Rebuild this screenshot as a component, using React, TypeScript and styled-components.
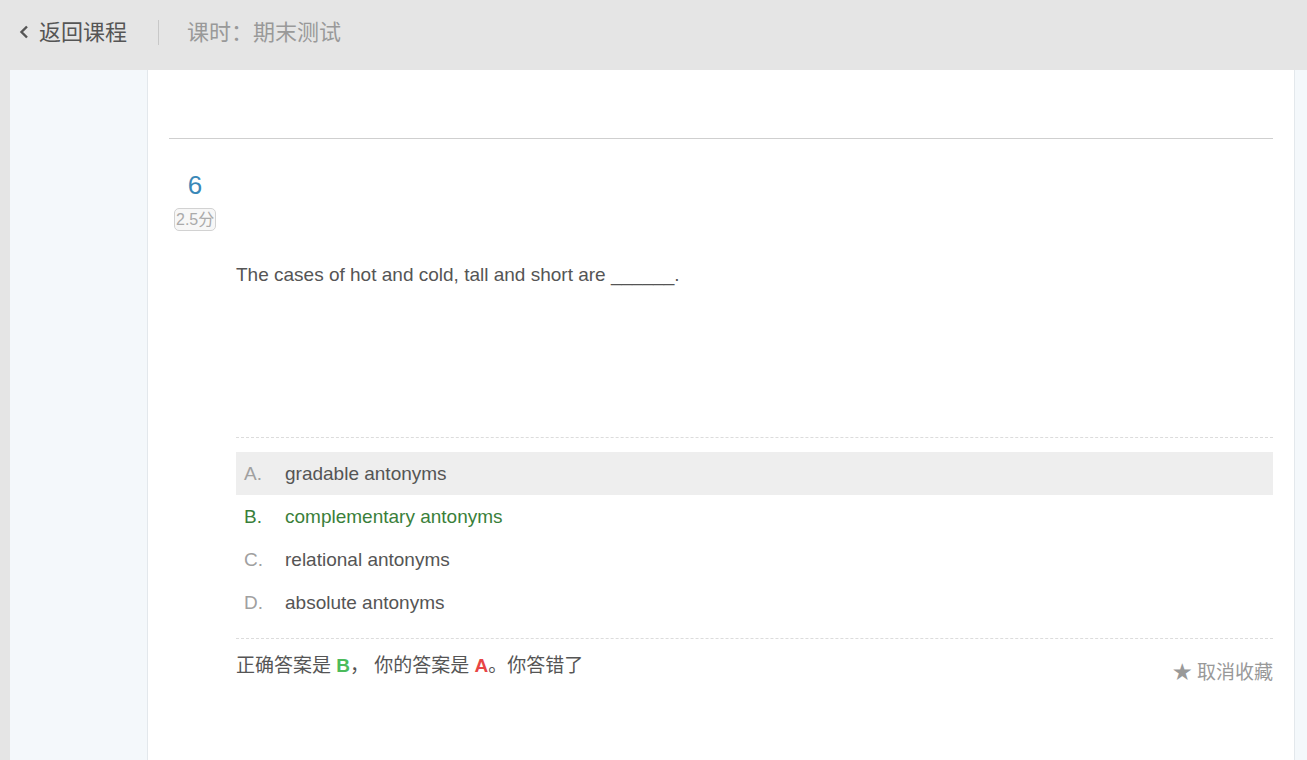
import React from 'react';
import styled, { createGlobalStyle } from 'styled-components';

const GlobalStyle = createGlobalStyle`
  html, body {
    margin: 0;
    padding: 0;
    background: #e5e5e5;
    font-family: 'Liberation Sans', Arial, 'Noto Sans CJK SC', sans-serif;
  }
`;

const Page = styled.div`
  height: 760px;
  display: flex;
  flex-direction: column;
  overflow: hidden;
`;

const TopBar = styled.div`
  height: 70px;
  flex-shrink: 0;
  box-sizing: border-box;
  padding: 0 0 6px 18px;
  display: flex;
  align-items: center;
  background: #e5e5e5;
`;

const BackLink = styled.a`
  display: flex;
  align-items: center;
  gap: 9px;
  font-size: 22px;
  color: #555;
  cursor: pointer;
  padding-right: 31px;
  border-right: 1px solid #c8c8c8;
  height: 25px;
  line-height: 25px;
`;

const LessonTitle = styled.span`
  font-size: 22px;
  line-height: 25px;
  color: #999;
  padding-left: 28px;
`;

const Body = styled.div`
  flex: 1;
  display: flex;
  padding-left: 10px;
`;

const Sidebar = styled.div`
  width: 137px;
  background: #f4f8fb;
  border-right: 1px solid #e3e8ec;
`;

const Main = styled.div`
  flex: 1;
  background: #fff;
  border-right: 1px solid #e3e8ec;
  padding: 68px 21px 0 21px;
`;

const RightRail = styled.div`
  width: 12px;
  background: #f4f8fb;
`;

const Rule = styled.div`
  height: 1px;
  background: #cfcfcf;
`;

const Question = styled.div`
  display: flex;
  padding-top: 30px;
`;

const IndexCol = styled.div`
  width: 67px;
  display: flex;
  flex-direction: column;
  align-items: flex-start;
`;

const Num = styled.div`
  width: 52px;
  text-align: center;
  font-size: 26px;
  color: #3a88b8;
  line-height: 32px;
`;

const Score = styled.span`
  margin-left: 5px;
  margin-top: 7px;
  border: 1px solid #d2d2d2;
  border-radius: 5px;
  background: #f7f7f7;
  color: #aaa;
  font-size: 16px;
  line-height: 21px;
  padding: 0 1px;
`;

const Content = styled.div`
  flex: 1;
`;

const Stem = styled.div`
  font-size: 19px;
  line-height: 22px;
  color: #555;
  margin-top: 95px;
  height: 173px;
`;

const Dashed = styled.div`
  border-top: 1px dashed #dcdcdc;
`;

const Options = styled.div`
  padding: 14px 0 14px;
`;

const Option = styled.div<{ $active?: boolean; $correct?: boolean }>`
  height: 43px;
  display: flex;
  align-items: center;
  font-size: 19px;
  background: ${p => (p.$active ? '#eeeeee' : 'transparent')};
  color: ${p => (p.$correct ? '#3a7f3a' : '#555')};
`;

const Letter = styled.span<{ $correct?: boolean }>`
  width: 49px;
  padding-left: 8px;
  box-sizing: border-box;
  color: ${p => (p.$correct ? '#3a7f3a' : '#a0a0a0')};
`;

const ResultRow = styled.div`
  display: flex;
  justify-content: space-between;
  padding-top: 16px;
`;

const Result = styled.div`
  font-size: 19px;
  line-height: 22px;
  color: #555;
`;

const Mark = styled.b<{ $color: string }>`
  color: ${p => p.$color};
`;

const Fav = styled.a`
  font-size: 19px;
  line-height: 22px;
  color: #999;
  margin-top: 7px;
  cursor: pointer;
`;

const options = [
  { key: 'A', text: 'gradable antonyms' },
  { key: 'B', text: 'complementary antonyms' },
  { key: 'C', text: 'relational antonyms' },
  { key: 'D', text: 'absolute antonyms' },
];

export default function App() {
  return (
    <Page>
      <GlobalStyle />
      <TopBar>
        <BackLink>
          <svg width="12" height="16" viewBox="0 0 12 16">
            <path d="M9 2.5 L3.5 8 L9 13.5" fill="none" stroke="#555" strokeWidth="2.4" />
          </svg>
          返回课程
        </BackLink>
        <LessonTitle>课时：期末测试</LessonTitle>
      </TopBar>
      <Body>
        <Sidebar />
        <Main>
          <Rule />
          <Question>
            <IndexCol>
              <Num>6</Num>
              <Score>2.5分</Score>
            </IndexCol>
            <Content>
              <Stem>The cases of hot and cold, tall and short are ______.</Stem>
              <Dashed />
              <Options>
                {options.map(o => (
                  <Option key={o.key} $active={o.key === 'A'} $correct={o.key === 'B'}>
                    <Letter $correct={o.key === 'B'}>{o.key}.</Letter>
                    {o.text}
                  </Option>
                ))}
              </Options>
              <Dashed />
              <ResultRow>
                <Result>
                  正确答案是 <Mark $color="#4cbb5b">B</Mark>， 你的答案是 <Mark $color="#e84545">A</Mark>。你答错了
                </Result>
                <Fav>★ 取消收藏</Fav>
              </ResultRow>
            </Content>
          </Question>
        </Main>
        <RightRail />
      </Body>
    </Page>
  );
}
